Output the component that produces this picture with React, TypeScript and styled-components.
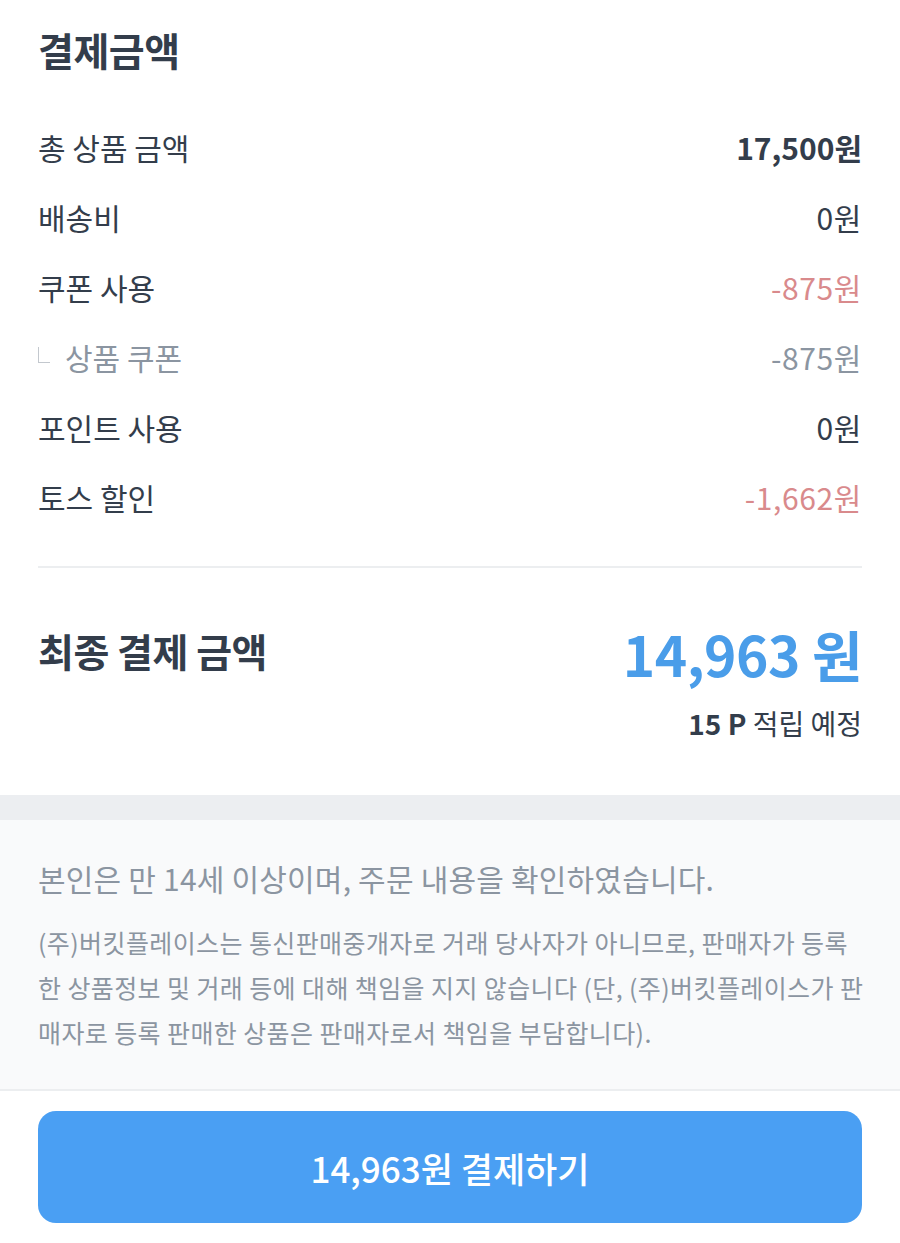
import React from 'react';
import styled, { createGlobalStyle } from 'styled-components';

const GlobalStyle = createGlobalStyle`
  body {
    margin: 0;
    background: #ffffff;
    font-family: 'Noto Sans CJK KR', 'Noto Sans', sans-serif;
    color: #333d4b;
  }
`;

type Tone = 'default' | 'strong' | 'minus' | 'sub';

const rows: { label: string; value: string; tone: Tone; sub?: boolean }[] = [
  { label: '총 상품 금액', value: '17,500원', tone: 'strong' },
  { label: '배송비', value: '0원', tone: 'default' },
  { label: '쿠폰 사용', value: '-875원', tone: 'minus' },
  { label: '상품 쿠폰', value: '-875원', tone: 'sub', sub: true },
  { label: '포인트 사용', value: '0원', tone: 'default' },
  { label: '토스 할인', value: '-1,662원', tone: 'minus' },
];

const App = () => {
  return (
    <>
      <GlobalStyle />
      <Page>
        <Summary>
          <Title>결제금액</Title>
          <RowList>
            {rows.map((row) => (
              <Row key={row.label + row.value}>
                <Label sub={row.sub}>
                  {row.sub && <SubMark />}
                  {row.label}
                </Label>
                <Value tone={row.tone}>{row.value}</Value>
              </Row>
            ))}
          </RowList>
          <Divider />
          <Total>
            <TotalRow>
              <TotalLabel>최종 결제 금액</TotalLabel>
              <TotalValue>14,963 원</TotalValue>
            </TotalRow>
            <Point>
              <strong>15 P</strong> 적립 예정
            </Point>
          </Total>
        </Summary>
        <Band />
        <Notice>
          <Agree>본인은 만 14세 이상이며, 주문 내용을 확인하였습니다.</Agree>
          <Legal>
            (주)버킷플레이스는 통신판매중개자로 거래 당사자가 아니므로, 판매자가 등록
            <br />
            한 상품정보 및 거래 등에 대해 책임을 지지 않습니다 (단, (주)버킷플레이스가 판
            <br />
            매자로 등록 판매한 상품은 판매자로서 책임을 부담합니다).
          </Legal>
        </Notice>
        <ButtonArea>
          <PayButton>14,963원 결제하기</PayButton>
        </ButtonArea>
      </Page>
    </>
  );
};

export default App;

const Page = styled.div`
  width: 900px;
  min-height: 1243px;
  background: #ffffff;
`;

const Summary = styled.section`
  padding: 0 38px;
`;

const Title = styled.h1`
  margin: 0;
  padding-top: 24px;
  font-size: 39px;
  line-height: 50px;
  font-weight: 700;
  color: #333d4b;
  letter-spacing: -0.5px;
`;

const RowList = styled.div`
  margin-top: 38px;
  display: flex;
  flex-direction: column;
`;

const Row = styled.div`
  height: 70px;
  display: flex;
  align-items: center;
  justify-content: space-between;
`;

const Label = styled.span<{ sub?: boolean }>`
  display: flex;
  align-items: center;
  font-size: 30px;
  color: ${(p) => (p.sub ? '#8b95a1' : '#333d4b')};
`;

const SubMark = styled.span`
  width: 11px;
  height: 15px;
  margin: -4px 15px 0 0;
  border-left: 1.5px solid #c3c8ce;
  border-bottom: 1.5px solid #c3c8ce;
`;

const toneColor: Record<Tone, string> = {
  default: '#333d4b',
  strong: '#333d4b',
  minus: '#d98a8c',
  sub: '#8b95a1',
};

const Value = styled.span<{ tone: Tone }>`
  font-size: 30px;
  font-weight: ${(p) => (p.tone === 'strong' ? 700 : 400)};
  color: ${(p) => toneColor[p.tone]};
  letter-spacing: ${(p) => (p.tone === 'strong' ? '0' : '0.6px')};
`;

const Divider = styled.hr`
  margin: 34px 0 0;
  border: none;
  height: 2px;
  background: #eceef0;
`;

const Total = styled.div`
  padding: 50px 0 52px;
  display: flex;
  flex-direction: column;
`;

const TotalRow = styled.div`
  height: 70px;
  display: flex;
  align-items: center;
  justify-content: space-between;
`;

const TotalLabel = styled.span`
  font-size: 39px;
  font-weight: 700;
  color: #333d4b;
  margin-top: -6px;
  letter-spacing: -0.5px;
`;

const TotalValue = styled.span`
  font-size: 55px;
  font-weight: 700;
  color: #4a9de9;
  letter-spacing: -0.5px;
`;

const Point = styled.div`
  margin-top: 15px;
  text-align: right;
  font-size: 28px;
  line-height: 40px;
  color: #333d4b;

  strong {
    font-weight: 700;
  }
`;

const Band = styled.div`
  height: 25px;
  background: #eceef1;
`;

const Notice = styled.section`
  padding: 38px 38px 34px;
  background: #f9fafb;
  border-bottom: 2px solid #eceef0;
`;

const Agree = styled.p`
  margin: 0;
  font-size: 30px;
  line-height: 40px;
  color: #8b95a1;
  letter-spacing: 0.2px;
`;

const Legal = styled.p`
  margin: 22px 0 0;
  font-size: 25px;
  line-height: 45px;
  color: #8b95a1;
  letter-spacing: 0.4px;
  white-space: nowrap;
`;

const ButtonArea = styled.div`
  padding: 20px 38px 18px;
`;

const PayButton = styled.button`
  width: 100%;
  height: 112px;
  border: none;
  border-radius: 18px;
  background: #4a9ff3;
  color: #ffffff;
  font-family: 'Noto Sans CJK KR', 'Noto Sans', sans-serif;
  font-size: 35px;
  font-weight: 500;
  cursor: pointer;
`;
